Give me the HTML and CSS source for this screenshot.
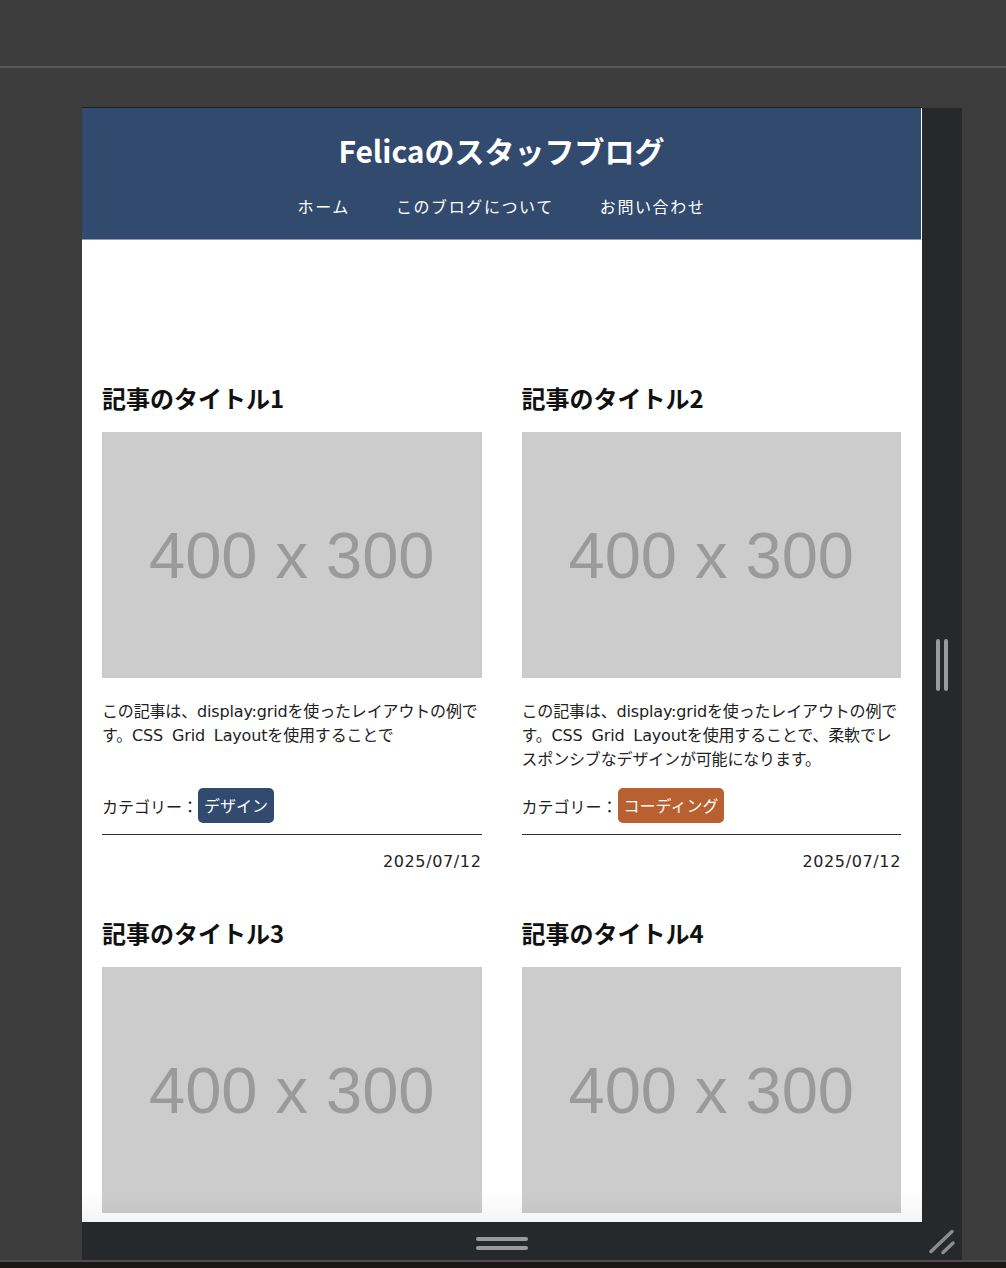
FILE: index.html
```html
<!DOCTYPE html>
<html lang="ja">
<head>
<meta charset="utf-8">
<title>Felicaのスタッフブログ</title>
<link rel="stylesheet" href="styles.css">
</head>
<body>
<div class="topbar"></div>
<div class="stage">
  <div class="device">
    <div class="viewport">
      <div class="page">
        <header class="site-header">
          <h1 class="site-title">Felicaのスタッフブログ</h1>
          <nav class="site-nav">
            <a href="#">ホーム</a>
            <a href="#">このブログについて</a>
            <a href="#">お問い合わせ</a>
          </nav>
        </header>
        <main class="posts">
          <article class="post">
            <h2 class="post-title">記事のタイトル1</h2>
            <div class="thumb">400 x 300</div>
            <p class="excerpt">この記事は、display:gridを使ったレイアウトの例です。CSS Grid Layoutを使用することで</p>
            <div class="meta">カテゴリー：<span class="tag tag-design">デザイン</span></div>
            <div class="rule"></div>
            <div class="date">2025/07/12</div>
          </article>
          <article class="post">
            <h2 class="post-title">記事のタイトル2</h2>
            <div class="thumb">400 x 300</div>
            <p class="excerpt">この記事は、display:gridを使ったレイアウトの例です。CSS Grid Layoutを使用することで、柔軟でレスポンシブなデザインが可能になります。</p>
            <div class="meta">カテゴリー：<span class="tag tag-coding">コーディング</span></div>
            <div class="rule"></div>
            <div class="date">2025/07/12</div>
          </article>
          <article class="post">
            <h2 class="post-title">記事のタイトル3</h2>
            <div class="thumb">400 x 300</div>
            <p class="excerpt">この記事は、display:gridを使ったレイアウトの例です。CSS Grid Layoutを使用することで</p>
            <div class="meta">カテゴリー：<span class="tag tag-design">デザイン</span></div>
            <div class="rule"></div>
            <div class="date">2025/07/12</div>
          </article>
          <article class="post">
            <h2 class="post-title">記事のタイトル4</h2>
            <div class="thumb">400 x 300</div>
            <p class="excerpt">この記事は、display:gridを使ったレイアウトの例です。CSS Grid Layoutを使用することで、柔軟でレスポンシブなデザインが可能になります。</p>
            <div class="meta">カテゴリー：<span class="tag tag-coding">コーディング</span></div>
            <div class="rule"></div>
            <div class="date">2025/07/12</div>
          </article>
        </main>
      </div>
      <div class="fade"></div>
    </div>
    <div class="side-rail"><span class="vgrip"></span></div>
    <div class="bottom-rail"><span class="hgrip"></span></div>
    <div class="corner">
      <svg width="40" height="38" viewBox="0 0 40 38" aria-hidden="true">
        <line x1="9" y1="29.5" x2="30" y2="9.5" stroke="#8c8c8c" stroke-width="3.5" stroke-linecap="round"/>
        <line x1="21" y1="30.5" x2="31" y2="21" stroke="#8c8c8c" stroke-width="3.5" stroke-linecap="round"/>
      </svg>
    </div>
  </div>
</div>
<div class="floor"></div>
</body>
</html>
```

FILE: styles.css
```css
* {
  box-sizing: border-box;
}

html, body {
  margin: 0;
  padding: 0;
}

body {
  height: 1268px;
  overflow: hidden;
  background: #3c3c3c;
  font-family: "Noto Sans CJK JP", "Noto Sans", sans-serif;
  color: #222;
  display: flex;
  flex-direction: column;
}

.topbar {
  height: 68px;
  border-bottom: 2px solid #5a5a5a;
  flex: none;
}

.stage {
  height: 1192px;
  padding: 39px 0 0 82px;
  flex: none;
}

.device {
  display: grid;
  grid-template-columns: 840px 40px;
  grid-template-rows: 1115px 38px;
}

.viewport {
  position: relative;
  overflow: hidden;
  background: #fff;
  border-top: 1px solid #1f1f1f;
}

.side-rail {
  margin-top: 1px;
  background: #27282a;
  display: flex;
  align-items: center;
  justify-content: center;
}

.vgrip {
  display: flex;
  gap: 4px;
}

.vgrip::before,
.vgrip::after {
  content: "";
  width: 4px;
  height: 52px;
  border-radius: 2px;
  background: #9a9a9a;
}

.bottom-rail {
  background: #27282a;
  display: flex;
  align-items: center;
  justify-content: center;
}

.hgrip {
  display: flex;
  flex-direction: column;
  gap: 5px;
  margin-top: 5px;
}

.hgrip::before,
.hgrip::after {
  content: "";
  width: 52px;
  height: 4px;
  border-radius: 2px;
  background: #9a9a9a;
}

.corner {
  background: #27282a;
}

.corner svg {
  display: block;
}

.floor {
  flex: 1;
  border-top: 2px solid #4e4e4e;
  background: #1b1717;
}

.fade {
  position: absolute;
  left: 0;
  right: 0;
  bottom: 0;
  height: 32px;
  background: linear-gradient(to bottom, rgba(0, 0, 0, 0), rgba(0, 0, 0, 0.045));
  pointer-events: none;
}

/* page */

.page {
  width: 839px;
  background: #fff;
}

.site-header {
  background: #314a6e;
  border-bottom: 1px solid #8e9db3;
  padding: 20px 0 21px;
  text-align: center;
  color: #fff;
}

.site-title {
  margin: 0;
  font-size: 30px;
  line-height: 45px;
  font-weight: 700;
}

.site-nav {
  margin-top: 21px;
  display: flex;
  justify-content: center;
  gap: 46px;
  font-size: 16px;
  line-height: 24px;
  letter-spacing: 0.1em;
}

.site-nav a {
  color: #fff;
  text-decoration: none;
}

.posts {
  padding: 140px 20px 0;
  display: grid;
  grid-template-columns: 1fr 1fr;
  column-gap: 40px;
  row-gap: 41px;
}

.post {
  display: flex;
  flex-direction: column;
  min-width: 0;
}

.post-title {
  margin: 0 0 16px;
  font-size: 24px;
  line-height: 36px;
  font-weight: 700;
  color: #111;
}

.thumb {
  height: 246px;
  margin-bottom: 22px;
  background: #cccccc;
  color: #9a9a9a;
  font-family: "Liberation Sans", Arial, sans-serif;
  font-size: 65px;
  display: flex;
  align-items: center;
  justify-content: center;
}

.excerpt {
  margin: 0 0 16px;
  flex-grow: 1;
  font-family: "DejaVu Sans", "Noto Sans CJK JP", sans-serif;
  font-size: 16px;
  line-height: 24px;
  letter-spacing: -0.01em;
  word-spacing: 0.25em;
}

.meta {
  display: flex;
  align-items: center;
  height: 35px;
  font-size: 16px;
}

.tag {
  color: #fff;
  border-radius: 5px;
  padding: 0 6px;
  line-height: 35px;
}

.tag-design {
  background: #314a6e;
}

.tag-coding {
  background: #b86030;
}

.rule {
  margin-top: 11px;
  border-top: 1px solid #333;
}

.date {
  margin-top: 15px;
  text-align: right;
  font-family: "DejaVu Sans", "Noto Sans CJK JP", sans-serif;
  font-size: 16px;
  line-height: 24px;
  letter-spacing: 0.04em;
}
```
